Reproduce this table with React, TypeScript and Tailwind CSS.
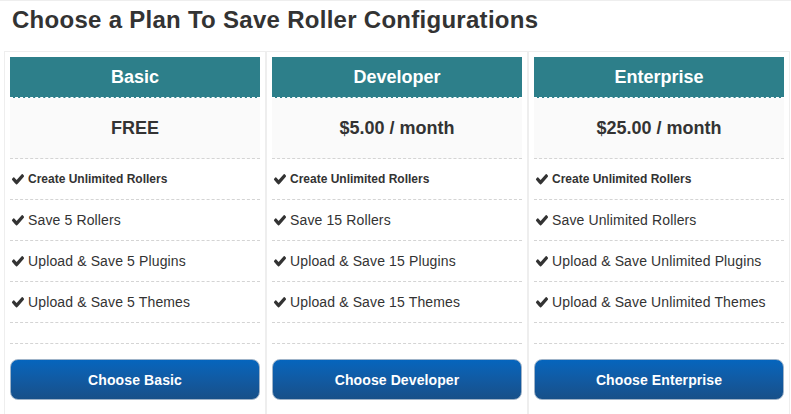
const plans = [
  {
    name: 'Basic',
    price: 'FREE',
    features: ['Save 5 Rollers', 'Upload & Save 5 Plugins', 'Upload & Save 5 Themes'],
  },
  {
    name: 'Developer',
    price: '$5.00 / month',
    features: ['Save 15 Rollers', 'Upload & Save 15 Plugins', 'Upload & Save 15 Themes'],
  },
  {
    name: 'Enterprise',
    price: '$25.00 / month',
    features: ['Save Unlimited Rollers', 'Upload & Save Unlimited Plugins', 'Upload & Save Unlimited Themes'],
  },
]

function Check() {
  return (
    <svg viewBox="0 0 1792 1792" preserveAspectRatio="none" className="w-[14px] h-[16px] shrink-0 fill-[#333]">
      <path d="M1671 566q0 40-28 68l-724 724-136 136q-28 28-68 28t-68-28l-136-136-362-362q-28-28-28-68t28-68l136-136q28-28 68-28t68 28l294 295 656-657q28-28 68-28t68 28l136 136q28 28 28 68z" />
    </svg>
  )
}

function PlanCard({ name, price, features }: { name: string; price: string; features: string[] }) {
  return (
    <div className="w-[262px] border border-[#eee] p-[5px] pb-[20px]">
      {/* Header */}
      <div className="h-[41px] bg-[#2d7f8a] border-b border-dashed border-white flex items-center justify-center text-white text-[18px] font-bold">
        {name}
      </div>
      {/* Price */}
      <div className="h-[61px] bg-[#fafafa] border-b border-dashed border-[#d4d4d4] flex items-center justify-center text-[18px] font-bold text-[#333]">
        {price}
      </div>
      {/* Features */}
      <ul>
        <li className="h-[41px] border-b border-dashed border-[#d4d4d4] flex items-center gap-[3px] pl-[1px] text-[12px] font-bold">
          <Check />
          Create Unlimited Rollers
        </li>
        {features.map(f => (
          <li key={f} className="h-[41px] border-b border-dashed border-[#d4d4d4] flex items-center gap-[3px] pl-[1px] text-[14px] tracking-[0.13px]">
            <Check />
            {f}
          </li>
        ))}
        <li className="h-[21px] border-b border-dashed border-[#d4d4d4]" />
      </ul>
      <button className="mt-[15px] w-full h-[41px] pt-[1px] rounded-[8px] border border-[#9fb3c8] bg-gradient-to-b from-[#0565bd] to-[#175089] text-white text-[14px] font-bold tracking-[0.1px]">
        Choose {name}
      </button>
    </div>
  )
}

export default function App() {
  return (
    <div className="w-[791px] h-[414px] overflow-hidden bg-white border-t border-[#eee] text-[#333] font-['Liberation_Sans',Arial,sans-serif]">
      <h1 className="pt-[5px] pl-[12px] text-[24px] leading-[28px] font-bold tracking-[0.28px]">
        Choose a Plan To Save Roller Configurations
      </h1>
      <div className="flex mt-[17px] pl-[4px]">
        {plans.map(p => (
          <PlanCard key={p.name} {...p} />
        ))}
      </div>
    </div>
  )
}
